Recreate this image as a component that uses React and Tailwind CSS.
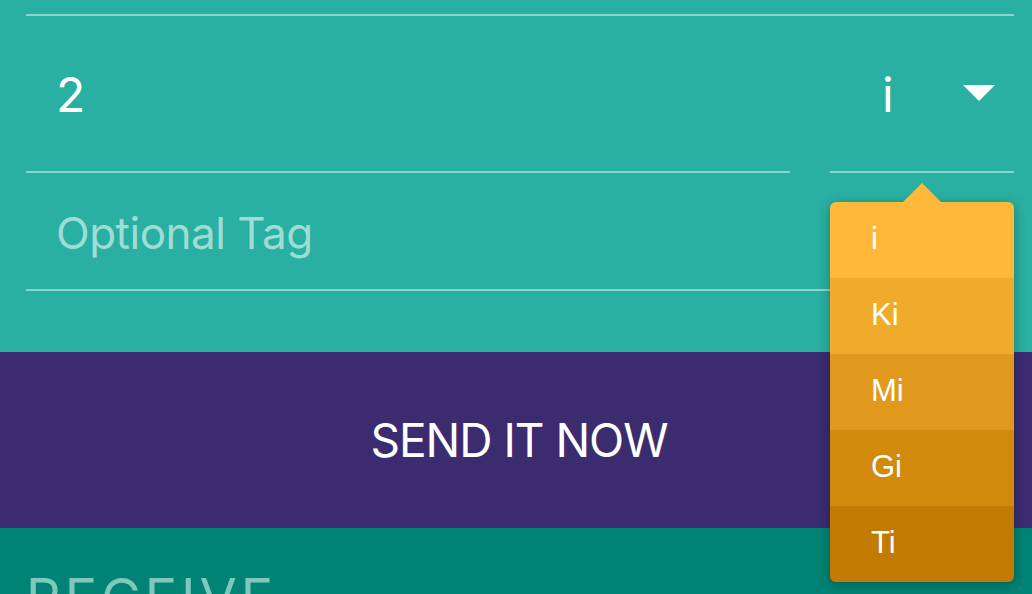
export default function App() {
  const items = [
    { label: "i", bg: "bg-[#ffb93a]" },
    { label: "Ki", bg: "bg-[#f0ab2d]" },
    { label: "Mi", bg: "bg-[#e0991c]" },
    { label: "Gi", bg: "bg-[#d18a0b]" },
    { label: "Ti", bg: "bg-[#c27b00]" },
  ];
  return (
    <div
      className="relative w-[1032px] h-[594px] overflow-hidden bg-[#29b0a2]"
      style={{ fontFamily: "Inter, 'Liberation Sans', sans-serif" }}
    >
      <div className="pl-[26px] pr-[18px] pt-[14px]">
        <div className="h-[2px] bg-[#8fd4cc]" />
        <div className="flex">
          <div className="flex-1 h-[157px] border-b-2 border-[#8fd4cc] flex items-center pl-[30px] pt-[2px]">
            <span className="text-[48px] leading-none text-white">2</span>
          </div>
          <div className="w-[184px] ml-[40px] h-[157px] border-b-2 border-[#8fd4cc] flex items-center pt-[2px]">
            <span className="text-[48px] leading-none text-white ml-[52px]">i</span>
            <svg className="ml-[69px] mt-[-3px]" width="32" height="16" viewBox="0 0 32 16">
              <path d="M0 0 L32 0 L16 16 Z" fill="#ffffff" />
            </svg>
          </div>
        </div>
        <div className="h-[118px] border-b-2 border-[#8fd4cc] flex items-center pl-[30px] pt-[4px]">
          <span className="text-[44px] leading-none text-[#9edcd4] tracking-[-0.5px]">Optional Tag</span>
        </div>
      </div>
      <div className="mt-[61px] h-[176px] bg-[#3b2c70] flex items-center justify-center pl-[6px]">
        <span className="text-[46px] leading-none text-white tracking-[-1px]">SEND IT NOW</span>
      </div>
      <div className="h-[100px] bg-[#008374] pl-[26px] pt-[43px]">
        <span className="text-[54px] leading-none text-[#7ec8bd] tracking-[4px]">RECEIVE</span>
      </div>

      <div className="absolute left-[830px] top-[183px] w-[184px]">
        <svg className="block ml-[72px]" width="40" height="20" viewBox="0 0 40 20">
          <path d="M0 20 L20 0 L40 20 Z" fill="#ffb93a" />
        </svg>
        <div
          className="rounded-[6px] overflow-hidden shadow-[0_2px_12px_rgba(0,0,0,0.3)] -mt-[1px]"
          style={{ fontFamily: "'Liberation Sans', Arial, sans-serif" }}
        >
          {items.map((it) => (
            <div key={it.label} className={`${it.bg} h-[76px] flex items-center pl-[41px] pb-[4px]`}>
              <span className="text-[31px] leading-none text-white">{it.label}</span>
            </div>
          ))}
        </div>
      </div>
    </div>
  );
}
